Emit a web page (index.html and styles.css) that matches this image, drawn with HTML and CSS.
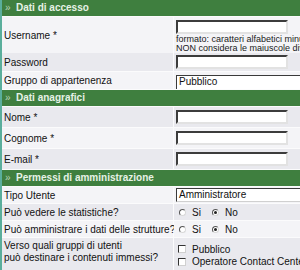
FILE: index.html
```html
<!DOCTYPE html>
<html lang="it">
  <head>
    <meta charset="UTF-8" />
    <title>Utente</title>
    <link rel="stylesheet" href="styles.css">
  </head>
  <body>
    <div class="form">
      <div class="section-title"><span class="raquo">»</span>Dati di accesso</div>
      <div class="row light user">
        <div class="label">Username *</div>
        <div class="field">
          <span class="input"></span>
          <div class="hint">formato: caratteri alfabetici minuscoli e numeri<br />NON considera le maiuscole diverse dalle minuscole</div>
        </div>
      </div>
      <div class="row dark">
        <div class="label">Password</div>
        <div class="field"><span class="input"></span></div>
      </div>
      <div class="row light last">
        <div class="label">Gruppo di appartenenza</div>
        <div class="field"><span class="select open">Pubblico</span></div>
      </div>

      <div class="section-title"><span class="raquo">»</span>Dati anagrafici</div>
      <div class="row dark tall">
        <div class="label">Nome *</div>
        <div class="field"><span class="input"></span></div>
      </div>
      <div class="row light tall">
        <div class="label">Cognome *</div>
        <div class="field"><span class="input"></span></div>
      </div>
      <div class="row dark tall">
        <div class="label">E-mail *</div>
        <div class="field"><span class="input"></span></div>
      </div>

      <div class="section-title"><span class="raquo">»</span>Permessi di amministrazione</div>
      <div class="row light short">
        <div class="label">Tipo Utente</div>
        <div class="field"><span class="select">Amministratore</span></div>
      </div>
      <div class="row dark short">
        <div class="label">Può vedere le statistiche?</div>
        <div class="field options">
          <span class="radio"></span><span class="opt">Si</span>
          <span class="radio checked"></span><span class="opt">No</span>
        </div>
      </div>
      <div class="row light short">
        <div class="label">Può amministrare i dati delle strutture?</div>
        <div class="field options">
          <span class="radio"></span><span class="opt">Si</span>
          <span class="radio checked"></span><span class="opt">No</span>
        </div>
      </div>
      <div class="row dark multi">
        <div class="label">Verso quali gruppi di utenti<br />può destinare i contenuti immessi?</div>
        <div class="field checks">
          <div class="check-item"><span class="checkbox"></span>Pubblico</div>
          <div class="check-item"><span class="checkbox"></span>Operatore Contact Center</div>
          <div class="check-item"><span class="checkbox"></span>Operatore</div>
        </div>
      </div>
    </div>
  </body>
</html>
```

FILE: styles.css
```css
* {
  margin: 0;
  padding: 0;
  box-sizing: border-box;
}

html,
body {
  overflow: hidden;
}

body {
  font-family: "Liberation Sans", Arial, sans-serif;
  font-size: 10px;
  color: #111;
  background: #fff;
}

.form {
  width: 420px;
  border-left: 2px solid #5aae9c;
  background: #fbfbfc;
  display: flex;
  flex-direction: column;
  gap: 1px;
}

.section-title {
  height: 16px;
  line-height: 16px;
  background: #3f7f3f;
  color: #e6f2e6;
  font-weight: bold;
  font-size: 10px;
  padding-left: 2px;
}

.raquo {
  display: inline-block;
  width: 12px;
  padding-left: 1px;
  color: #b6d2b6;
  font-weight: normal;
}

.row {
  display: grid;
  grid-template-columns: 171px 1fr;
  column-gap: 1px;
  background: #fbfbfc;
  height: 18px;
}

.row.user {
  height: 35px;
}

.row.last {
  height: 17px;
}

.row.tall {
  height: 20px;
}

.row.short {
  height: 16px;
}

.row.multi {
  height: 44px;
}

.row > div {
  display: flex;
  align-items: center;
}

.row.light > div {
  background: #f4f4f7;
}

.row.dark > div {
  background: #e9e9ee;
}

.label {
  padding-left: 2px;
  white-space: nowrap;
}

.field {
  padding-left: 2px;
  white-space: nowrap;
}

.row.user .field {
  flex-direction: column;
  align-items: flex-start;
  justify-content: flex-start;
  padding-top: 3px;
}

.input {
  display: block;
  width: 112px;
  height: 14px;
  background: #fff;
  border: 2px solid;
  border-color: #3c3c3c #e2e2e2 #e2e2e2 #3c3c3c;
}

.hint {
  font-size: 9px;
  line-height: 9px;
  margin-top: 1px;
  color: #1a1a1a;
}

.select {
  display: block;
  width: 170px;
  height: 14px;
  line-height: 12px;
  padding-left: 2px;
  background: #fff;
  border: 1px solid;
  border-color: #3a3a3a #d0d0d0 #d0d0d0 #3a3a3a;
}

.row.last .field {
  align-items: flex-end;
}

.select.open {
  height: 14px;
  border-bottom: none;
}

.options .radio {
  display: inline-block;
  width: 7px;
  height: 7px;
  margin: 0 6px 0 3px;
  border-radius: 50%;
  border: 1px solid;
  border-color: #555 #d8d8d8 #d8d8d8 #555;
  background: #fff;
  position: relative;
}

.options .radio.checked::after {
  content: "";
  position: absolute;
  left: 1px;
  top: 1px;
  width: 3px;
  height: 3px;
  border-radius: 50%;
  background: #222;
}

.opt {
  margin-right: 8px;
}

.checks {
  flex-direction: column;
  align-items: flex-start !important;
  justify-content: flex-start;
  padding-top: 5px;
}

.row.multi .label {
  align-items: flex-start;
  line-height: 12px;
  padding-top: 2px;
}

.check-item {
  display: flex;
  align-items: center;
  height: 12.5px;
}

.checkbox {
  display: inline-block;
  width: 8px;
  height: 8px;
  margin: 0 6px 0 2px;
  background: #fff;
  border: 1px solid;
  border-color: #333 #d0d0d0 #d0d0d0 #333;
}
```
